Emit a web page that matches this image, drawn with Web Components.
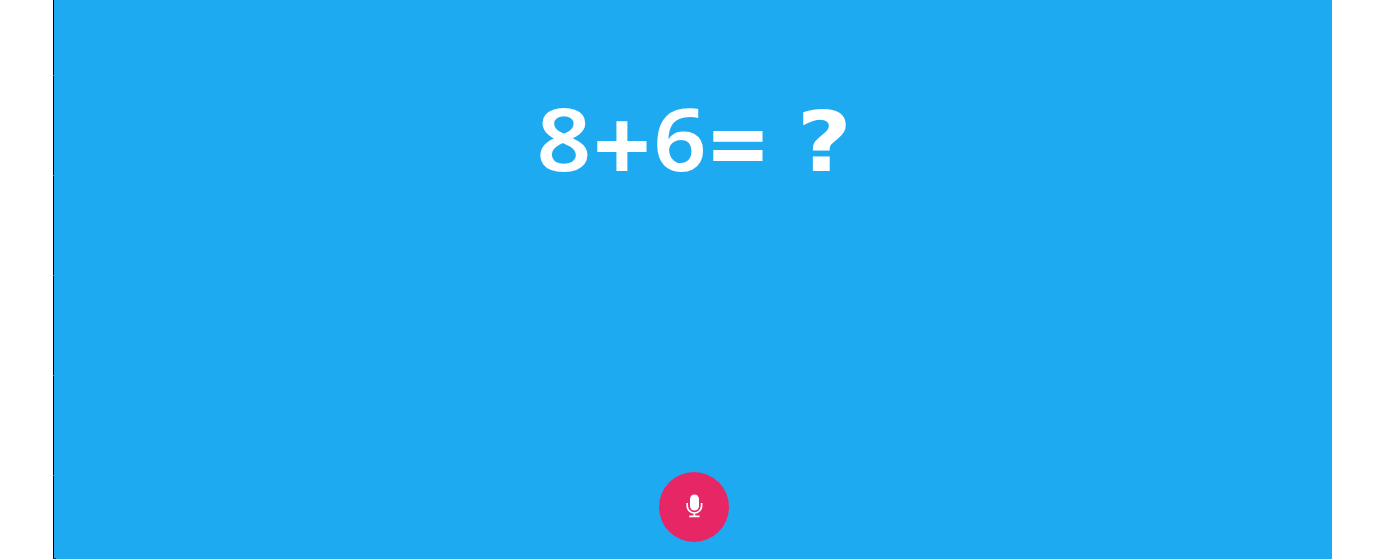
<!DOCTYPE html>
<html lang="en"><head><meta charset="utf-8"><title>Math quiz</title>
<style>body{margin:0;background:#fff;overflow:hidden}</style></head>
<body>
<quiz-board><quiz-question></quiz-question><mic-button></mic-button></quiz-board>
<script>
class QuizBoard extends HTMLElement{constructor(){super();this.attachShadow({mode:'open'}).innerHTML=`
<style>:host{display:flex;flex-direction:column;align-items:center;justify-content:space-between;box-sizing:border-box;height:559px;margin:0 68px 0 53px;padding:90px 0 17px 3px;background:linear-gradient(#666,#666) 0 75px/1px 1px no-repeat,linear-gradient(#666,#666) 0 175px/1px 1px no-repeat,linear-gradient(#666,#666) 0 275px/1px 1px no-repeat,linear-gradient(#666,#666) 0 375px/1px 1px no-repeat,linear-gradient(#666,#666) 0 475px/1px 1px no-repeat,linear-gradient(#234,#234) 0 100%/3px 1px no-repeat,linear-gradient(#000,#000) 0 0/1px 100% no-repeat,#1eaaf1}</style>
<slot></slot>`}}
class QuizQuestion extends HTMLElement{constructor(){super();this.attachShadow({mode:'open'}).innerHTML=`
<style>
:host{display:block;width:320px;height:100px;color:#fff;font:700 88px/100px "Noto Sans",sans-serif}
.row{display:flex;white-space:pre}
span{display:block;width:58px;text-align:center;transform:translate(var(--dx,1px),var(--dy,-2.3px)) scale(var(--sx,1.09),var(--sy,.985))}
.digit{font-weight:640}
.six{--sx:1.06;--sy:.99;--dy:-2.6px}
.op{--sx:1.15;--sy:1.16;--dy:3px}
.mark{--sx:1.08;--sy:.96;--dy:2.5px;--dx:.2px;font-family:"DejaVu Sans",sans-serif}
.gap{width:29px}
</style>
<div class="row"><span class="digit">8</span><span class="op">+</span><span class="digit six">6</span><span class="op">=</span><span class="gap"> </span><span class="mark">?</span></div>`}}
class MicButton extends HTMLElement{constructor(){super();this.attachShadow({mode:'open'}).innerHTML=`
<style>
:host{display:block}
button{display:grid;place-items:center;width:70px;height:70px;padding:0;border:0;border-radius:50%;background:#e72765}
svg{display:block}
</style>
<button aria-label="Speak"><svg width="70" height="70" viewBox="0 0 70 70"><rect x="31" y="22.5" width="9" height="16" rx="4.5" fill="#fff"/><path d="M28.2 31v2.8a7.2 7.2 0 0 0 14.4 0V31M35.4 41v3.3M30.3 44.4h10.2" fill="none" stroke="#fff" stroke-width="1.7"/></svg></button>`}}
customElements.define('quiz-board',QuizBoard);
customElements.define('quiz-question',QuizQuestion);
customElements.define('mic-button',MicButton);
</script>
</body></html>
